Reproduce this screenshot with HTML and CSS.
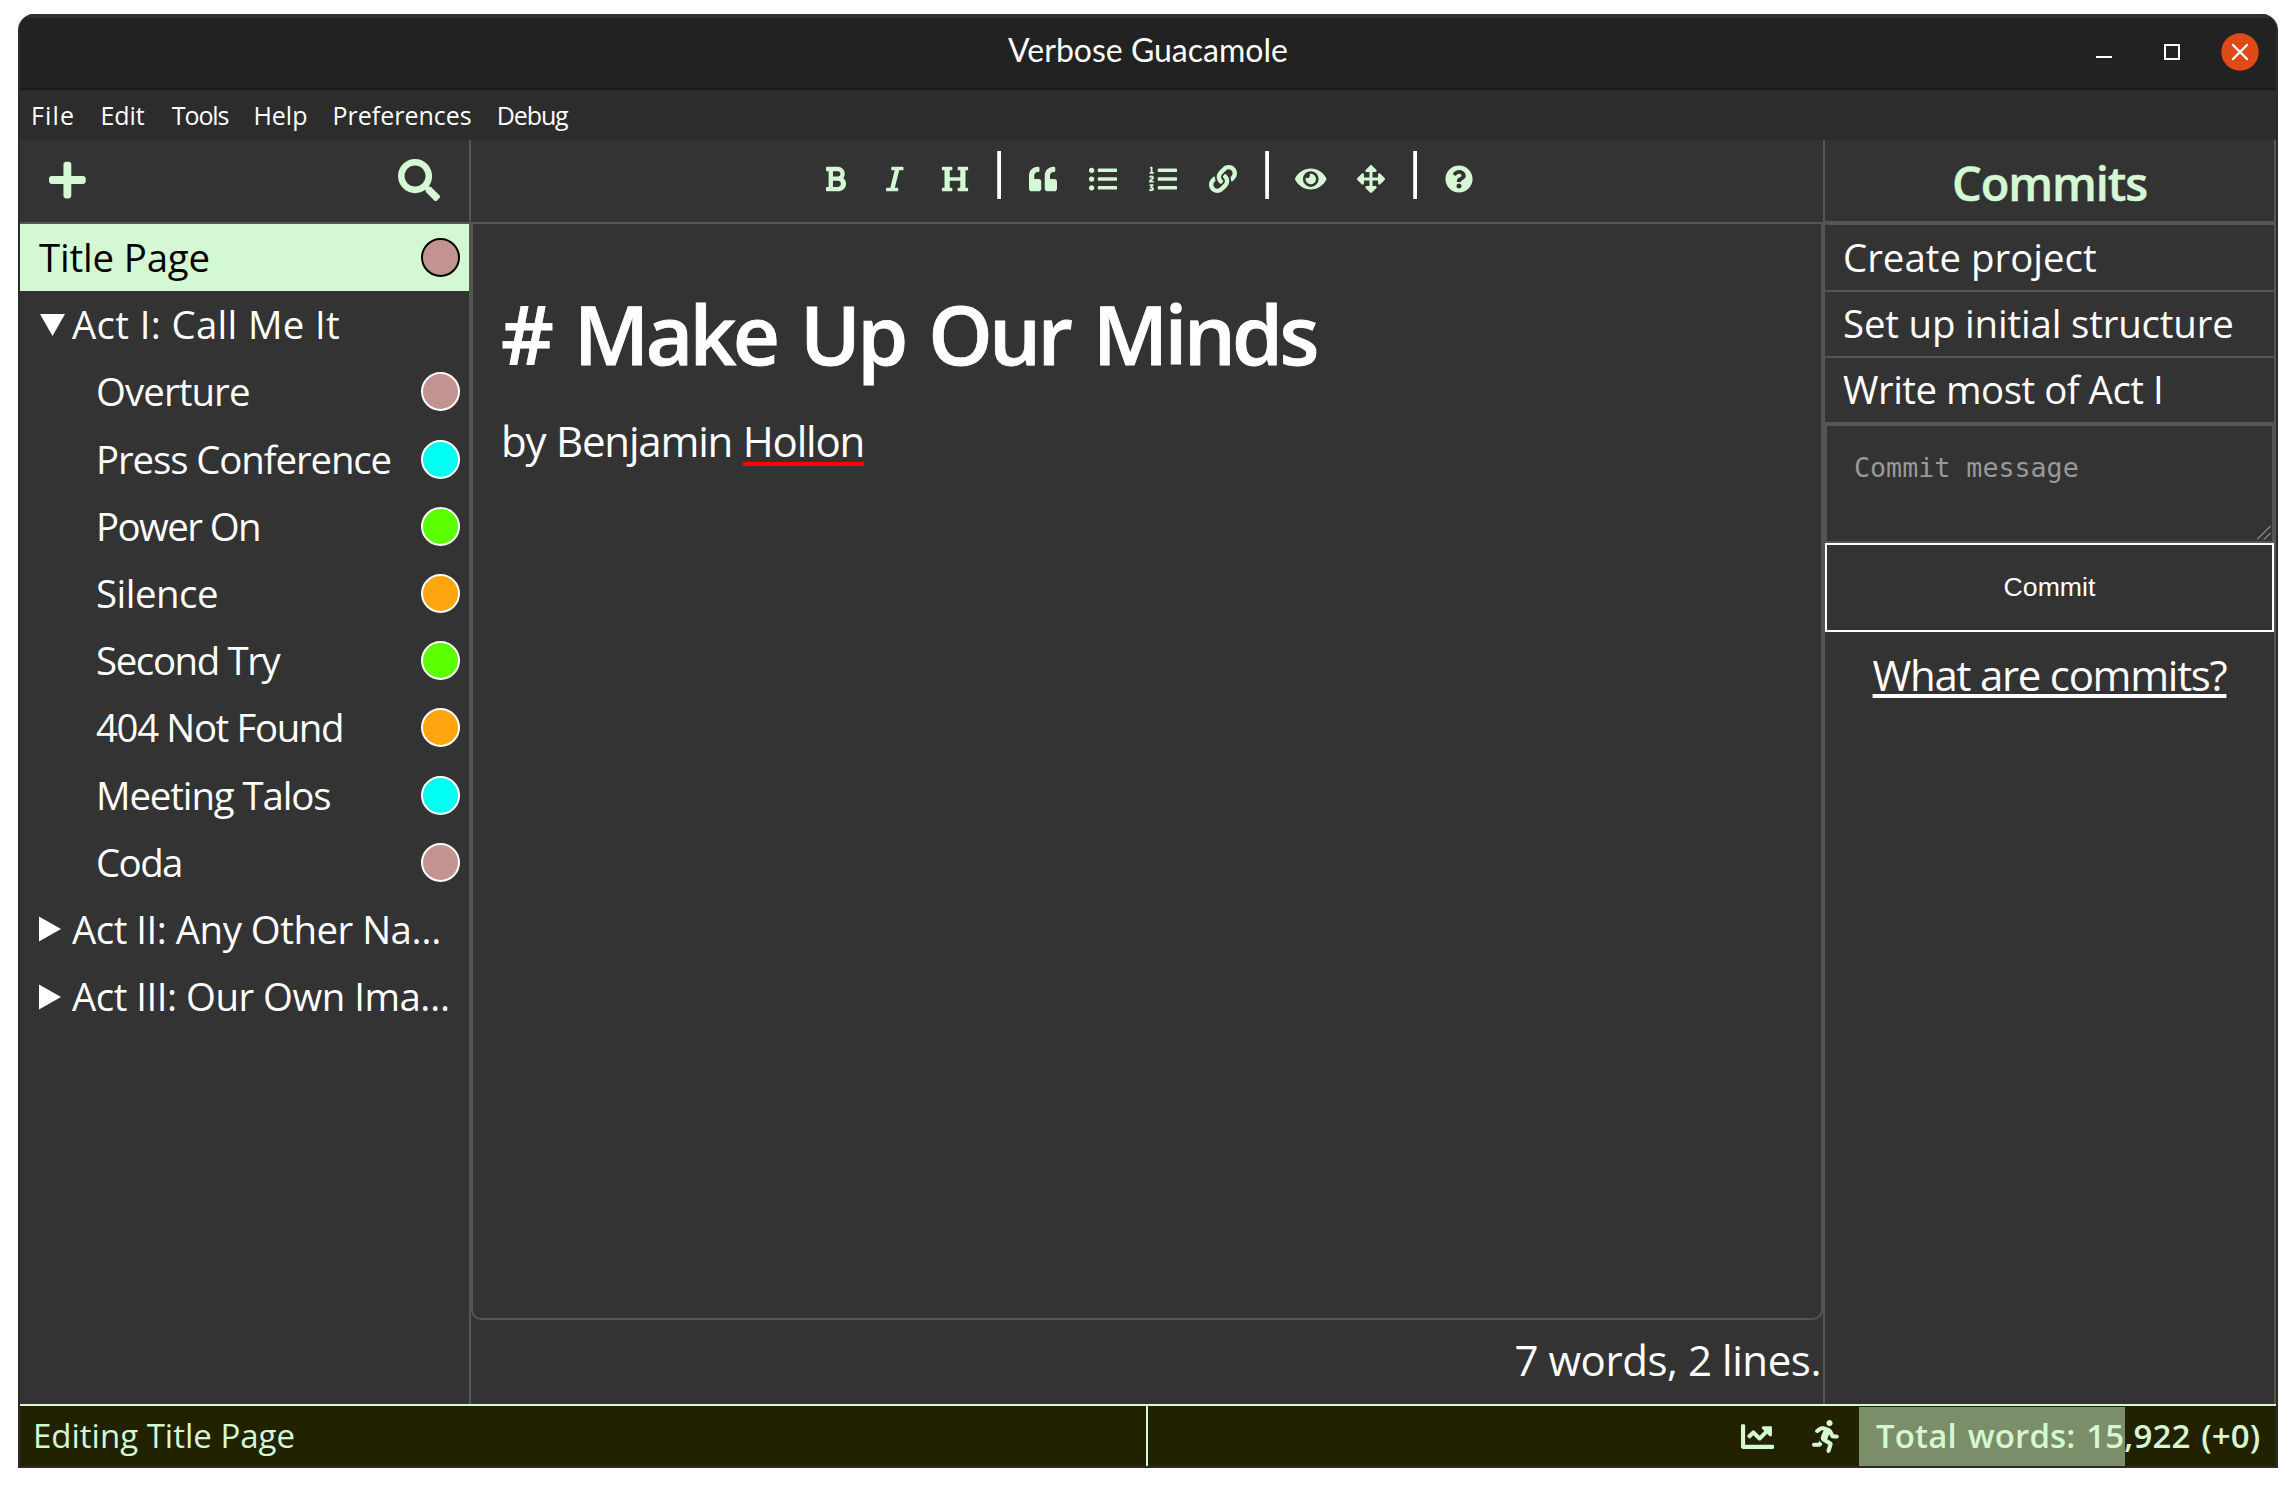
FILE: index.html
```
<!DOCTYPE html>
<html lang="en">
<head>
<meta charset="utf-8">
<title>Verbose Guacamole</title>
<link rel="stylesheet" href="styles.css">
</head>
<body>
<div class="window">
  <header class="titlebar">
    <h1 class="window-title">Verbose Guacamole</h1>
    <div class="window-controls">
      <svg class="control" viewBox="0 0 38 38"><path d="M11 24h16" stroke="#fff" stroke-width="2"/></svg>
      <svg class="control" viewBox="0 0 38 38"><path d="M12 12h14v14H12z" fill="none" stroke="#fff" stroke-width="2"/></svg>
      <svg class="control" viewBox="0 0 38 38"><circle cx="19" cy="19" r="18.7" fill="#e04a17"/><path d="M12 12l14 14M26 12L12 26" stroke="#fff" stroke-width="2.4" stroke-linecap="round"/></svg>
    </div>
  </header>
  <nav class="menubar">
    <span class="menu wide">File</span>
    <span class="menu">Edit</span>
    <span class="menu narrow">Tools</span>
    <span class="menu">Help</span>
    <span class="menu">Preferences</span>
    <span class="menu narrow">Debug</span>
  </nav>

  <div class="workspace">
    <aside class="sidebar">
      <div class="sidebar-tools">
        <svg class="tool-icon" viewBox="0 0 448 512"><path d="M416 208H272V64c0-17.67-14.33-32-32-32h-32c-17.67 0-32 14.33-32 32v144H32c-17.67 0-32 14.33-32 32v32c0 17.67 14.33 32 32 32h144v144c0 17.67 14.33 32 32 32h32c17.67 0 32-14.33 32-32V304h144c17.67 0 32-14.33 32-32v-32c0-17.67-14.33-32-32-32z"/></svg>
        <svg class="tool-icon" viewBox="0 0 512 512"><path d="M505 442.7L405.3 343c-4.5-4.5-10.6-7-17-7H372c27.6-35.3 44-79.7 44-128C416 93.1 322.9 0 208 0S0 93.1 0 208s93.1 208 208 208c48.3 0 92.7-16.4 128-44v16.3c0 6.4 2.5 12.5 7 17l99.7 99.7c9.4 9.4 24.6 9.4 33.9 0l28.3-28.3c9.4-9.4 9.4-24.6.1-34zM208 336c-70.7 0-128-57.2-128-128 0-70.7 57.2-128 128-128 70.7 0 128 57.2 128 128 0 70.7-57.2 128-128 128z"/></svg>
      </div>
      <ul class="tree">
        <li class="row selected"><span class="name track-1">Title Page</span><i class="dot rose"></i></li>
        <li class="row"><svg class="arrow" viewBox="0 0 34 26"><path d="M1 2h25L13.5 24z"/></svg><span class="name track-plus">Act I: Call Me It</span></li>
        <li class="row nested"><span class="name track-3">Overture</span><i class="dot rose"></i></li>
        <li class="row nested"><span class="name track-4">Press Conference</span><i class="dot cyan"></i></li>
        <li class="row nested"><span class="name track-6">Power On</span><i class="dot green"></i></li>
        <li class="row nested"><span class="name track-2">Silence</span><i class="dot orange"></i></li>
        <li class="row nested"><span class="name track-5">Second Try</span><i class="dot green"></i></li>
        <li class="row nested"><span class="name track-5">404 Not Found</span><i class="dot orange"></i></li>
        <li class="row nested"><span class="name track-4">Meeting Talos</span><i class="dot cyan"></i></li>
        <li class="row nested"><span class="name track-6">Coda</span><i class="dot rose"></i></li>
        <li class="row"><svg class="arrow" viewBox="0 0 34 26"><path d="M0 .5v25L22 13z"/></svg><span class="name track-2">Act II: Any Other Na…</span></li>
        <li class="row"><svg class="arrow" viewBox="0 0 34 26"><path d="M0 .5v25L22 13z"/></svg><span class="name track-2">Act III: Our Own Ima…</span></li>
      </ul>
    </aside>

    <main class="main">
      <div class="toolbar">
        <button class="tool"><svg viewBox="0 0 384 512"><path d="M333.49 238a122 122 0 0 0 27-65.21C367.87 96.49 308 32 233.42 32H34a16 16 0 0 0-16 16v48a16 16 0 0 0 16 16h31.87v288H34a16 16 0 0 0-16 16v48a16 16 0 0 0 16 16h209.32c70.8 0 134.14-51.75 141-122.4 4.74-48.45-16.39-92.06-50.83-119.6zM145.66 112h87.76a48 48 0 0 1 0 96h-87.76zm87.76 288h-87.76V288h87.76a56 56 0 0 1 0 112z"/></svg></button>
        <button class="tool"><svg viewBox="0 0 320 512"><path d="M320 48v32a16 16 0 0 1-16 16h-62.76l-80 320H208a16 16 0 0 1 16 16v32a16 16 0 0 1-16 16H16a16 16 0 0 1-16-16v-32a16 16 0 0 1 16-16h62.76l80-320H112a16 16 0 0 1-16-16V48a16 16 0 0 1 16-16h192a16 16 0 0 1 16 16z"/></svg></button>
        <button class="tool"><svg viewBox="0 0 512 512"><path d="M448 96v320h32a16 16 0 0 1 16 16v32a16 16 0 0 1-16 16H320a16 16 0 0 1-16-16v-32a16 16 0 0 1 16-16h32V288H160v128h32a16 16 0 0 1 16 16v32a16 16 0 0 1-16 16H32a16 16 0 0 1-16-16v-32a16 16 0 0 1 16-16h32V96H32a16 16 0 0 1-16-16V48a16 16 0 0 1 16-16h160a16 16 0 0 1 16 16v32a16 16 0 0 1-16 16h-32v128h192V96h-32a16 16 0 0 1-16-16V48a16 16 0 0 1 16-16h160a16 16 0 0 1 16 16v32a16 16 0 0 1-16 16z"/></svg></button>
        <i class="separator"></i>
        <button class="tool"><svg viewBox="0 0 512 512"><path d="M464 256h-80v-64c0-35.3 28.7-64 64-64h8c13.3 0 24-10.7 24-24V56c0-13.3-10.7-24-24-24h-8c-88.4 0-160 71.6-160 160v240c0 26.5 21.5 48 48 48h128c26.5 0 48-21.5 48-48V304c0-26.5-21.5-48-48-48zm-288 0H96v-64c0-35.3 28.7-64 64-64h8c13.3 0 24-10.7 24-24V56c0-13.3-10.7-24-24-24h-8C71.6 32 0 103.6 0 192v240c0 26.5 21.5 48 48 48h128c26.5 0 48-21.5 48-48V304c0-26.5-21.5-48-48-48z"/></svg></button>
        <button class="tool"><svg viewBox="0 0 512 512"><path d="M48 48a48 48 0 1 0 48 48 48 48 0 0 0-48-48zm0 160a48 48 0 1 0 48 48 48 48 0 0 0-48-48zm0 160a48 48 0 1 0 48 48 48 48 0 0 0-48-48zm448 16H176a16 16 0 0 0-16 16v32a16 16 0 0 0 16 16h320a16 16 0 0 0 16-16v-32a16 16 0 0 0-16-16zm0-320H176a16 16 0 0 0-16 16v32a16 16 0 0 0 16 16h320a16 16 0 0 0 16-16V80a16 16 0 0 0-16-16zm0 160H176a16 16 0 0 0-16 16v32a16 16 0 0 0 16 16h320a16 16 0 0 0 16-16v-32a16 16 0 0 0-16-16z"/></svg></button>
        <button class="tool"><svg viewBox="0 0 512 512"><path d="M61.77 401l17.5-20.15a19.92 19.92 0 0 0 5.07-14.19v-3.31C84.34 356 80.5 352 73 352H16a8 8 0 0 0-8 8v16a8 8 0 0 0 8 8h22.83a157.41 157.41 0 0 0-11 12.31l-5.61 7c-4 5.07-5.25 10.13-2.8 14.88l1.05 1.93c3 5.76 6.29 7.88 12.25 7.88h4.73c10.33 0 15.94 2.44 15.94 9.09 0 4.72-4.2 8.22-14.36 8.22a41.54 41.54 0 0 1-15.47-3.12c-6.49-3.88-11.74-3.5-15.6 3.12l-5.59 9.31c-3.72 6.13-3.19 11.72 2.63 15.94 7.71 4.69 20.38 9.44 37 9.44 34.16 0 48.5-22.75 48.5-44.12-.03-14.38-9.12-29.76-28.73-34.88zM496 384H176a16 16 0 0 0-16 16v32a16 16 0 0 0 16 16h320a16 16 0 0 0 16-16v-32a16 16 0 0 0-16-16zm0-320H176a16 16 0 0 0-16 16v32a16 16 0 0 0 16 16h320a16 16 0 0 0 16-16V80a16 16 0 0 0-16-16zm0 160H176a16 16 0 0 0-16 16v32a16 16 0 0 0 16 16h320a16 16 0 0 0 16-16v-32a16 16 0 0 0-16-16zM16 160h64a8 8 0 0 0 8-8v-16a8 8 0 0 0-8-8H64V40a8 8 0 0 0-8-8H32a8 8 0 0 0-7.14 4.42l-8 16A8 8 0 0 0 24 64h8v64H16a8 8 0 0 0-8 8v16a8 8 0 0 0 8 8zm-3.91 160H80a8 8 0 0 0 8-8v-16a8 8 0 0 0-8-8H41.32c3.29-10.29 48.34-18.68 48.34-56.44 0-29.06-25-39.56-44.47-39.56-21.36 0-33.8 10-40.46 18.75-4.37 5.59-3 10.84 2.8 15.37l8.58 6.88c5.61 4.56 11 2.47 16.12-2.44a13.44 13.44 0 0 1 9.46-3.84c3.33 0 9.28 1.56 9.28 8.75C51 248.19 0 257.31 0 304.59v4C0 316 5.08 320 12.09 320z"/></svg></button>
        <button class="tool"><svg viewBox="0 0 512 512"><path d="M326.612 185.391c59.747 59.809 58.927 155.698.36 214.59-.11.12-.24.25-.36.37l-67.2 67.2c-59.27 59.27-155.699 59.262-214.96 0-59.27-59.26-59.27-155.7 0-214.96l37.106-37.106c9.84-9.84 26.786-3.3 27.294 10.606.648 17.722 3.826 35.527 9.69 52.721 1.986 5.822.567 12.262-3.783 16.612l-13.087 13.087c-28.026 28.026-28.905 73.66-1.155 101.96 28.024 28.579 74.086 28.749 102.325.51l67.2-67.19c28.191-28.191 28.073-73.757 0-101.83-3.701-3.694-7.429-6.564-10.341-8.569a16.037 16.037 0 0 1-6.947-12.606c-.396-10.567 3.348-21.456 11.698-29.806l21.054-21.055c5.521-5.521 14.182-6.199 20.584-1.731a152.482 152.482 0 0 1 20.522 17.197zM467.547 44.449c-59.261-59.262-155.69-59.27-214.96 0l-67.2 67.2c-.12.12-.25.25-.36.37-58.566 58.892-59.387 154.781.36 214.59a152.454 152.454 0 0 0 20.521 17.196c6.402 4.468 15.064 3.789 20.584-1.731l21.054-21.055c8.35-8.35 12.094-19.239 11.698-29.806a16.037 16.037 0 0 0-6.947-12.606c-2.912-2.005-6.64-4.875-10.341-8.569-28.073-28.073-28.191-73.639 0-101.83l67.2-67.19c28.239-28.239 74.3-28.069 102.325.51 27.75 28.3 26.872 73.934-1.155 101.96l-13.087 13.087c-4.35 4.35-5.769 10.79-3.783 16.612 5.864 17.194 9.042 34.999 9.69 52.721.509 13.906 17.454 20.446 27.294 10.606l37.106-37.106c59.271-59.259 59.271-155.699.001-214.959z"/></svg></button>
        <i class="separator"></i>
        <button class="tool"><svg viewBox="0 0 576 512"><path d="M572.52 241.4C518.29 135.59 410.93 64 288 64S57.68 135.64 3.48 241.41a32.35 32.35 0 0 0 0 29.19C57.71 376.41 165.07 448 288 448s230.32-71.64 284.52-177.41a32.35 32.35 0 0 0 0-29.19zM288 400a144 144 0 1 1 144-144 143.93 143.93 0 0 1-144 144zm0-240a95.31 95.31 0 0 0-25.31 3.79 47.85 47.85 0 0 1-66.9 66.9A95.78 95.78 0 1 0 288 160z"/></svg></button>
        <button class="tool"><svg viewBox="0 0 512 512"><path d="M352.201 425.775l-79.196 79.196c-9.373 9.373-24.568 9.373-33.941 0l-79.196-79.196c-15.119-15.119-4.411-40.971 16.971-40.97h51.162L228 284H127.196v51.162c0 21.382-25.851 32.09-40.971 16.971L7.029 272.937c-9.373-9.373-9.373-24.569 0-33.941L86.225 159.8c15.119-15.119 40.971-4.411 40.971 16.971V228H228V127.196h-51.23c-21.382 0-32.09-25.851-16.971-40.971l79.196-79.196c9.373-9.373 24.568-9.373 33.941 0l79.196 79.196c15.119 15.119 4.411 40.971-16.971 40.971h-51.162V228h100.804v-51.162c0-21.382 25.851-32.09 40.97-16.971l79.196 79.196c9.373 9.373 9.373 24.569 0 33.941L425.773 352.2c-15.119 15.119-40.971 4.411-40.97-16.971V284H284v100.804h51.23c21.382 0 32.09 25.851 16.971 40.971z"/></svg></button>
        <i class="separator"></i>
        <button class="tool"><svg viewBox="0 0 512 512"><path d="M504 256c0 136.997-111.043 248-248 248S8 392.997 8 256C8 119.083 119.043 8 256 8s248 111.083 248 248zM262.655 90c-54.497 0-89.255 22.957-116.549 63.758-3.536 5.286-2.353 12.415 2.715 16.258l34.699 26.31c5.205 3.947 12.621 3.008 16.665-2.122 17.864-22.658 30.113-35.797 57.303-35.797 20.429 0 45.698 13.148 45.698 32.958 0 14.976-12.363 22.667-32.534 33.976C247.128 238.528 216 254.941 216 296v4c0 6.627 5.373 12 12 12h56c6.627 0 12-5.373 12-12v-1.333c0-28.462 83.186-29.647 83.186-106.667 0-58.002-60.165-102-116.531-102zM256 338c-25.365 0-46 20.635-46 46 0 25.364 20.635 46 46 46s46-20.636 46-46c0-25.365-20.635-46-46-46z"/></svg></button>
      </div>
      <article class="editor">
        <h2 class="doc-heading"># Make Up Our Minds</h2>
        <p class="doc-line">by Benjamin <span class="misspelled">Hollon</span></p>
      </article>
      <p class="counts">7 words, 2 lines.</p>
    </main>

    <aside class="commits">
      <h2 class="commits-title">Commits</h2>
      <ul class="commit-list">
        <li class="commit">Create project</li>
        <li class="commit track-1">Set up initial structure</li>
        <li class="commit track-2">Write most of Act I</li>
      </ul>
      <div class="message-box">
        <textarea class="message" placeholder="Commit message"></textarea>
        <svg class="grip" viewBox="0 0 14 14"><path d="M0 13.5L13.5 0M7 13.5L13.5 7" stroke="#ccc" fill="none"/></svg>
      </div>
      <button class="commit-button">Commit</button>
      <a class="help-link">What are commits?</a>
    </aside>
  </div>

  <footer class="statusbar">
    <div class="status-left">Editing Title Page</div>
    <div class="status-right">
      <svg class="status-icon" viewBox="0 0 512 512"><path d="M496 384H64V80c0-8.84-7.16-16-16-16H16C7.16 64 0 71.16 0 80v336c0 17.67 14.33 32 32 32h464c8.84 0 16-7.16 16-16v-32c0-8.84-7.16-16-16-16zM464 96H345.94c-21.38 0-32.09 25.85-16.97 40.97l32.4 32.4L288 242.75l-73.37-73.37c-12.5-12.5-32.76-12.5-45.25 0l-68.69 68.69c-6.25 6.25-6.25 16.38 0 22.63l22.62 22.62c6.25 6.25 16.38 6.25 22.63 0L192 237.25l73.37 73.37c12.5 12.5 32.76 12.5 45.25 0l96-96 32.4 32.4c15.12 15.12 40.97 4.41 40.97-16.97V112c.01-8.84-7.15-16-15.99-16z"/></svg>
      <svg class="status-icon" viewBox="0 0 416 512"><path d="M272 96c26.51 0 48-21.49 48-48S298.51 0 272 0s-48 21.49-48 48 21.49 48 48 48zM113.69 317.47l-14.8 34.52H32c-17.67 0-32 14.33-32 32s14.33 32 32 32h77.45c19.25 0 36.58-11.44 44.11-29.09l8.79-20.52-10.67-6.3c-17.32-10.23-30.06-25.37-37.99-42.61zM384 223.99h-44.03l-26.06-53.25c-12.5-25.55-35.45-44.23-61.78-50.94l-71.08-21.14c-28.3-6.8-57.77-.55-80.84 17.14l-39.67 30.41c-14.03 10.75-16.69 30.83-5.94 44.86s30.84 16.69 44.86 5.94l39.69-30.41c7.67-5.89 17.44-8 25.27-6.14l14.7 4.37-37.46 87.39c-12.62 29.48-1.31 64.01 26.3 80.31l84.98 50.17-27.47 87.73c-5.28 16.86 4.11 34.82 20.97 40.09 3.19 1 6.41 1.48 9.58 1.48 13.61 0 26.23-8.77 30.52-22.45l31.64-101.06c5.91-20.77-2.89-43.08-21.64-54.39l-61.24-36.14 31.31-78.28 20.27 41.43c8 16.34 24.92 26.89 43.11 26.89H384c17.67 0 32-14.33 32-32s-14.33-31.99-32-31.99z"/></svg>
      <div class="goal">Total words: 15,922 (+0)</div>
    </div>
  </footer>
</div>
</body>
</html>
```
FILE: styles.css
```
:root {
  --mint: #d3f8d3;
  --line: #50584f;
  --panel: #333;
  --bar: #2c2c2c;
}

* { box-sizing: border-box; margin: 0; padding: 0; }

body {
  background: #fff;
  color: #fff;
  font-family: "Open Sans", sans-serif;
}

ul { list-style: none; }

.window {
  display: flex;
  flex-direction: column;
  width: 2260px;
  height: 1454px;
  margin: 14px 18px;
  background: var(--panel);
  border: 2px solid #2b2b2b;
  border-top: 0;
  border-radius: 16px 16px 0 0;
  overflow: hidden;
}

.titlebar {
  display: grid;
  grid-template-columns: 1fr auto 1fr;
  align-items: center;
  height: 76px;
  padding-bottom: 5px;
  background: #222;
  border-top: 4px solid #303030;
  border-bottom: 2px solid #191919;
}

.window-title {
  grid-column: 2;
  font: 400 32px "Lato", sans-serif;
  line-height: 40px;
  padding-bottom: 2px;
}

.window-controls {
  display: flex;
  justify-content: flex-end;
  gap: 30px;
  padding: 2px 17px 0 0;
}

.control { width: 38px; height: 38px; }

.menubar {
  display: flex;
  gap: 25px;
  height: 50px;
  padding-left: 11px;
  background: var(--bar);
  font-size: 25px;
  line-height: 50px;
}

.menu.wide { letter-spacing: 1.2px; }
.menu.narrow { letter-spacing: -1.1px; }
.menu:nth-child(3) { padding: 0 0 0 2px; }

.workspace {
  display: grid;
  grid-template-columns: 451px 1352px 453px;
  height: 1264px;
}

.sidebar { border-right: 2px solid var(--line); }

.sidebar-tools {
  display: flex;
  align-items: center;
  justify-content: space-between;
  height: 84px;
  padding: 0 29px 3px;
  border-bottom: 2px solid var(--line);
}

.tool-icon { height: 42px; fill: var(--mint); }

.row {
  display: flex;
  align-items: center;
  height: 67.2px;
  padding: 0 9px 0 19px;
  font-size: 38.4px;
  line-height: 66px;
  white-space: nowrap;
}

.row.nested { padding-left: 76px; }
.row.selected { background: var(--mint); color: #000; }
.name { flex: 1; padding-bottom: 1px; }
.arrow { width: 34px; height: 26px; margin-right: -1px; fill: #fff; }

.dot {
  width: 39px;
  height: 39px;
  border: 2px solid currentColor;
  border-radius: 50%;
}

.rose { background: #c29391; }
.cyan { background: #00fff2; }
.green { background: #5bff00; }
.orange { background: #ffa60f; }

.track-plus { letter-spacing: .33px; }
.track-1 { letter-spacing: -.17px; }
.track-2 { letter-spacing: -.5px; }
.track-3 { letter-spacing: -.9px; }
.track-4 { letter-spacing: -1.12px; }
.track-5 { letter-spacing: -1.37px; }
.track-6 { letter-spacing: -1.56px; }

.main { display: flex; flex-direction: column; }

.toolbar {
  display: flex;
  justify-content: center;
  height: 84px;
  border-bottom: 2px solid var(--line);
}

.tool {
  display: flex;
  align-items: center;
  justify-content: center;
  width: 60px;
  height: 78px;
  background: none;
  border: 0;
}

.tool svg { height: 28px; fill: var(--mint); }

.separator {
  width: 4px;
  height: 48px;
  margin: 11px 12px;
  background: #fff;
  border-left: 1px solid #d0d0d0;
}

.editor {
  height: 1096px;
  padding: 59px 28px;
  border: 2px solid var(--line);
  border-top: 0;
  border-radius: 0 0 10px 10px;
}

.doc-heading {
  font-size: 82px;
  font-weight: 600;
  line-height: 100px;
  letter-spacing: -3.7px;
  word-spacing: 6px;
  -webkit-text-stroke: .8px #fff;
}

.doc-line {
  margin-top: 28px;
  font-size: 42px;
  line-height: 60px;
  letter-spacing: -1.2px;
  word-spacing: 1px;
}

.misspelled {
  text-decoration: underline 4px #f00;
  text-underline-offset: 5px;
  text-decoration-skip-ink: none;
}

.counts {
  padding-right: 2px;
  font-size: 42px;
  line-height: 80px;
  letter-spacing: -.43px;
  text-align: right;
}

.commits {
  display: flex;
  flex-direction: column;
  border: 0 solid var(--line);
  border-width: 0 2px;
}

.commits-title {
  height: 85px;
  padding-top: 5px;
  border-bottom: 4px solid var(--line);
  color: var(--mint);
  font-size: 47px;
  font-weight: 600;
  line-height: 77px;
  letter-spacing: -1.1px;
  text-align: center;
  -webkit-text-stroke: .5px var(--mint);
}

.commit {
  height: 66px;
  padding-left: 18px;
  border-bottom: 2px solid var(--line);
  font-size: 38.4px;
  line-height: 62px;
}

.commit:first-child { height: 67px; line-height: 64px; }

.message-box {
  position: relative;
  height: 119px;
}

.message {
  display: block;
  width: 100%;
  height: 100%;
  padding: 26px 27px;
  background: none;
  border: 2px solid var(--line);
  color: #fff;
  font: 26.67px/31px "DejaVu Sans Mono", monospace;
  overflow: hidden;
  resize: none;
}

.message::placeholder { color: #999; }

.grip {
  position: absolute;
  right: 3px;
  bottom: 3px;
  width: 14px;
  height: 14px;
}

.commit-button {
  height: 89px;
  background: none;
  border: 2px solid #fff;
  color: #fff;
  font: 26.67px "Liberation Sans", sans-serif;
}

.help-link {
  align-self: center;
  margin-top: 13px;
  font-size: 42px;
  line-height: 60px;
  letter-spacing: -1.28px;
  text-decoration: underline 4px;
  text-underline-offset: 3px;
  text-decoration-skip-ink: none;
}

.statusbar {
  display: grid;
  grid-template-columns: 1128px 1fr;
  height: 62px;
  background: #232200;
  border-top: 2px solid var(--mint);
  color: var(--mint);
  font-size: 33px;
  line-height: 60px;
}

.status-left {
  padding-left: 13px;
  border-right: 2px solid var(--mint);
}

.status-right {
  display: flex;
  align-items: center;
  justify-content: flex-end;
}

.status-icon { height: 33px; margin-right: 38px; fill: var(--mint); }
.status-icon + .status-icon { margin-right: 20px; }

.goal {
  width: 417px;
  height: 59px;
  padding-left: 17px;
  align-self: flex-end;
  background: linear-gradient(to right, #7c8e69 266px, transparent 266px);
  font-weight: 600;
  line-height: 57px;
  letter-spacing: .15px;
  word-spacing: 2px;
  white-space: nowrap;
}
```
